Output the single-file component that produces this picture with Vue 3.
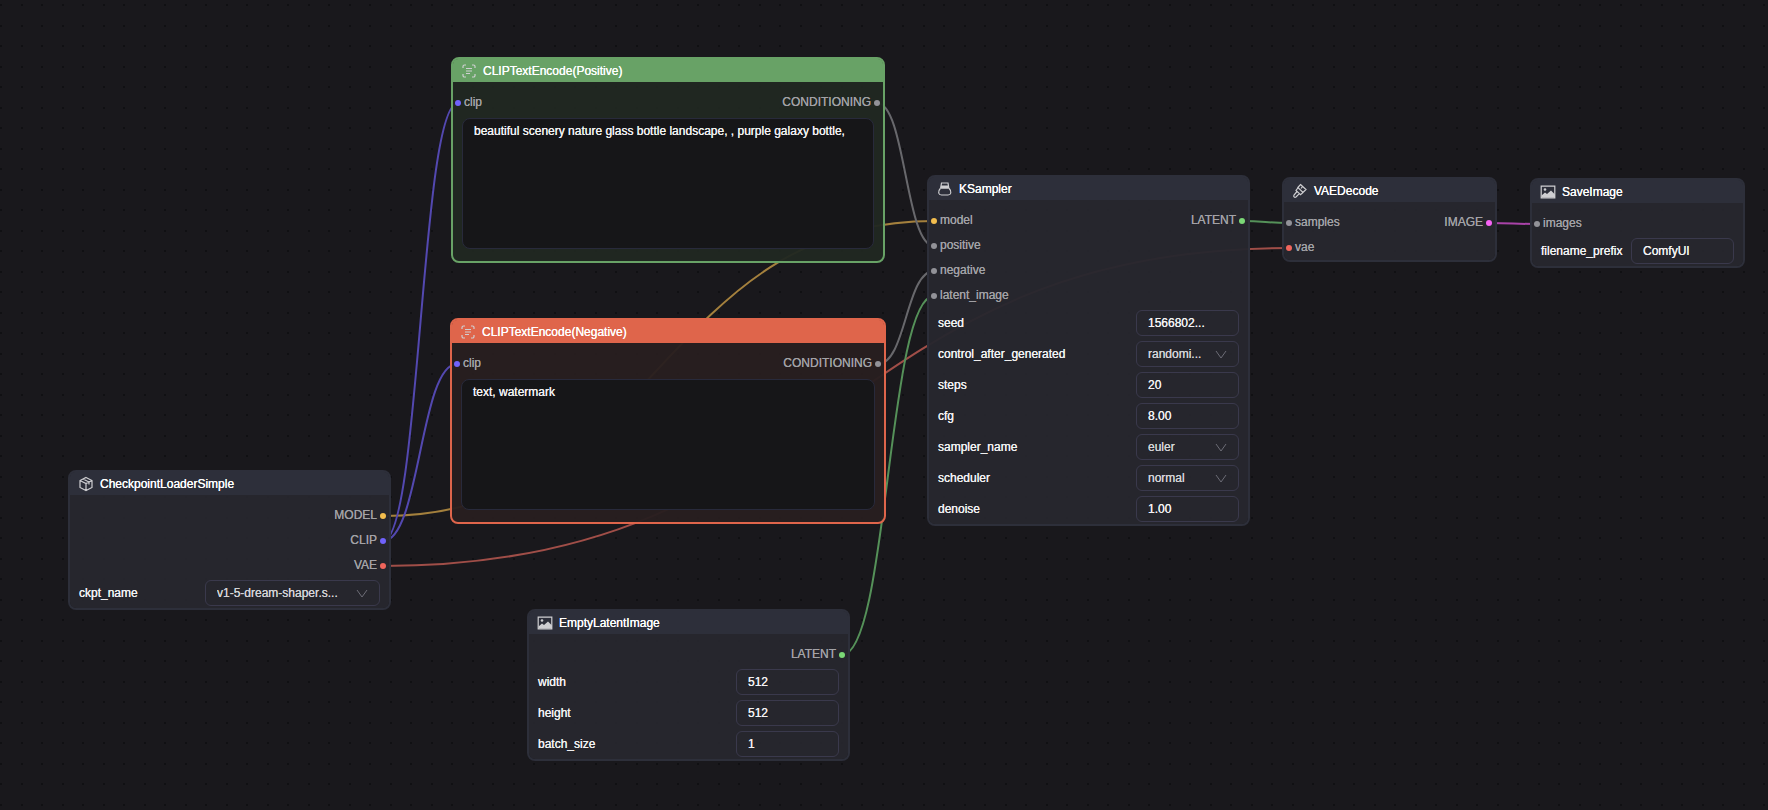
<script setup>
const nodes = [
  {
    id: 'positive', title: 'CLIPTextEncode(Positive)', icon: 'scan', tone: 'green', x: 451, y: 57, w: 434,
    inputs: [{ name: 'clip', color: 'violet' }],
    outputs: [{ name: 'CONDITIONING', color: 'gray' }],
    prompt: 'beautiful scenery nature glass bottle landscape, , purple galaxy bottle,',
  },
  {
    id: 'negative', title: 'CLIPTextEncode(Negative)', icon: 'scan', tone: 'orange', x: 450, y: 318, w: 436,
    inputs: [{ name: 'clip', color: 'violet' }],
    outputs: [{ name: 'CONDITIONING', color: 'gray' }],
    prompt: 'text, watermark',
  },
  {
    id: 'checkpoint', title: 'CheckpointLoaderSimple', icon: 'box', x: 68, y: 470, w: 323,
    inputs: [],
    outputs: [{ name: 'MODEL', color: 'yellow' }, { name: 'CLIP', color: 'violet' }, { name: 'VAE', color: 'red' }],
    fields: [{ name: 'ckpt_name', value: 'v1-5-dream-shaper.s...', select: true, wide: true }],
  },
  {
    id: 'latent', title: 'EmptyLatentImage', icon: 'image', x: 527, y: 609, w: 323,
    inputs: [],
    outputs: [{ name: 'LATENT', color: 'green' }],
    fields: [{ name: 'width', value: '512' }, { name: 'height', value: '512' }, { name: 'batch_size', value: '1' }],
  },
  {
    id: 'sampler', title: 'KSampler', icon: 'sampler', x: 927, y: 175, w: 323,
    inputs: [
      { name: 'model', color: 'yellow' },
      { name: 'positive', color: 'gray' },
      { name: 'negative', color: 'gray' },
      { name: 'latent_image', color: 'gray' },
    ],
    outputs: [{ name: 'LATENT', color: 'green' }],
    fields: [
      { name: 'seed', value: '1566802...' },
      { name: 'control_after_generated', value: 'randomi...', select: true },
      { name: 'steps', value: '20' },
      { name: 'cfg', value: '8.00' },
      { name: 'sampler_name', value: 'euler', select: true },
      { name: 'scheduler', value: 'normal', select: true },
      { name: 'denoise', value: '1.00' },
    ],
  },
  {
    id: 'decode', title: 'VAEDecode', icon: 'brush', x: 1282, y: 177, w: 215,
    inputs: [{ name: 'samples', color: 'gray' }, { name: 'vae', color: 'red' }],
    outputs: [{ name: 'IMAGE', color: 'pink' }],
  },
  {
    id: 'save', title: 'SaveImage', icon: 'image', x: 1530, y: 178, w: 215,
    inputs: [{ name: 'images', color: 'gray' }],
    outputs: [],
    fields: [{ name: 'filename_prefix', value: 'ComfyUI' }],
  },
]

const links = [
  { from: ['checkpoint', 0], to: ['sampler', 0], color: '#a4803d' },
  { from: ['checkpoint', 1], to: ['positive', 0], color: '#5348b0' },
  { from: ['checkpoint', 1], to: ['negative', 0], color: '#5348b0' },
  { from: ['checkpoint', 2], to: ['decode', 1], color: '#a04e48' },
  { from: ['positive', 0], to: ['sampler', 1], color: '#68686c' },
  { from: ['negative', 0], to: ['sampler', 2], color: '#68686c' },
  { from: ['latent', 0], to: ['sampler', 3], color: '#559159' },
  { from: ['sampler', 0], to: ['decode', 0], color: '#559159' },
  { from: ['decode', 0], to: ['save', 0], color: '#aa43a9' },
]

const byId = Object.fromEntries(nodes.map((n) => [n.id, n]))
const portY = (node, row) => node.y + 46 + row * 25

function curve({ from, to }) {
  const a = byId[from[0]]
  const b = byId[to[0]]
  const x1 = a.x + a.w - 8
  const y1 = portY(a, from[1])
  const x2 = b.x + 7
  const y2 = portY(b, to[1])
  const mid = (x1 + x2) / 2
  return `M${x1} ${y1} C${mid} ${y1} ${mid} ${y2} ${x2} ${y2}`
}
</script>

<template>
  <main class="canvas">
    <svg class="backdrop" aria-hidden="true">
      <defs>
        <pattern id="dots" x="0" y="4" width="41" height="41" patternUnits="userSpaceOnUse">
          <circle cx="1" cy="1" r="1" />
          <circle cx="22" cy="1" r="1" />
          <circle cx="1" cy="22" r="1" />
          <circle cx="22" cy="22" r="1" />
        </pattern>
      </defs>
      <rect class="grid" width="100%" height="100%" />
      <path v-for="(link, i) in links" :key="i" class="link" :d="curve(link)" :stroke="link.color" />
    </svg>

    <section
      v-for="node in nodes"
      :key="node.id"
      class="node"
      :class="node.tone"
      :style="{ left: node.x + 'px', top: node.y + 'px', width: node.w + 'px' }"
    >
      <header class="head">
        <svg v-if="node.icon === 'scan'" class="icon" viewBox="0 0 16 16">
          <path d="M2 5V3.500A1.500 1.500 0 0 1 3.500 2H5M11 2h1.500A1.500 1.500 0 0 1 14 3.500V5M14 11v1.500a1.500 1.500 0 0 1-1.500 1.500H11M5 14H3.500A1.500 1.500 0 0 1 2 12.500V11M5 5.500h6M5 8h6M5 10.500h4" />
        </svg>
        <svg v-else-if="node.icon === 'box'" class="icon" viewBox="0 0 16 16">
          <path d="M8 1.500l6 3v7l-6 3-6-3v-7zM2 4.500l6 3 6-3M8 7.500v7M5 3l6 3v2.500" />
        </svg>
        <svg v-else-if="node.icon === 'image'" class="icon" viewBox="0 0 16 16">
          <path d="M1.200 2.200h13.600v11.600H1.200z" />
          <path class="solid" d="M1.500 13.500V11.500l3.500-3 2 1.500 4-3.500 4 4v3z" />
          <circle class="solid" cx="5" cy="5.500" r="1.300" />
        </svg>
        <svg v-else-if="node.icon === 'sampler'" class="icon" viewBox="0 0 16 16">
          <path d="M4.500 2h6.500l.8 5H3.700zM3.300 7.500C1.800 9 1.400 10.500 1.700 12c.3 1.500 1.200 2 2.800 2h6.500c1.600 0 2.500-.5 2.800-2 .3-1.500-.1-3-1.600-4.500" />
          <path class="solid" d="M4 4.500h7.500l.5 3H3.500z" />
        </svg>
        <svg v-else class="icon" viewBox="0 0 16 16">
          <path d="M8.500 1.500l5.500 5-3 3-5.200-5zM5.800 5L4 7.500l4.500 4.200L11 9.500M5 8.500l-3 3.500c-.9 1.500.5 2.800 2 2l3.300-3.300M10.500 3.500L9 5.500" />
        </svg>
        <h2 class="title">{{ node.title }}</h2>
      </header>

      <div class="ports">
        <ul class="side">
          <li v-for="port in node.inputs" :key="port.name" class="port">
            <i class="dot" :class="port.color"></i>{{ port.name }}
          </li>
        </ul>
        <ul class="side out">
          <li v-for="port in node.outputs" :key="port.name" class="port">
            {{ port.name }}<i class="dot" :class="port.color"></i>
          </li>
        </ul>
      </div>

      <textarea v-if="node.prompt" class="prompt" :value="node.prompt" :aria-label="node.title" spellcheck="false"></textarea>

      <div v-if="node.fields" class="fields">
        <div v-for="field in node.fields" :key="field.name" class="field">
          <label class="label" :for="node.id + '-' + field.name">{{ field.name }}</label>
          <div v-if="field.select" class="picker" :class="{ wide: field.wide }">
            <select :id="node.id + '-' + field.name" class="box select">
              <option>{{ field.value }}</option>
            </select>
            <svg class="chevron" viewBox="0 0 12 10" aria-hidden="true"><path d="M1 1l5 7 5-7" /></svg>
          </div>
          <input v-else :id="node.id + '-' + field.name" class="box" type="text" :value="field.value" />
        </div>
      </div>
    </section>
  </main>
</template>

<style>
body {
  background: #19181c;
}
</style>

<style scoped>
* {
  box-sizing: border-box;
}
.canvas {
  position: relative;
  width: 100%;
  min-height: 100vh;
  overflow: hidden;
  background: #19181c;
  font-family: "Liberation Sans", Arial, sans-serif;
  font-size: 12px;
  color: #f2f2f3;
}
.backdrop {
  position: absolute;
  inset: 0;
  width: 100%;
  height: 100%;
}
.backdrop circle {
  fill: #0d0d10;
}
.grid {
  fill: url(#dots);
}
.link {
  fill: none;
  stroke-width: 2;
}
.node {
  --edge: #2d2f3a;
  --head: #2d2f3a;
  --body: rgba(38, 38, 46, 0.96);
  position: absolute;
  display: flex;
  flex-direction: column;
  border: 2px solid var(--edge);
  border-radius: 8px;
  background: var(--body);
  background-clip: padding-box;
  text-shadow: 0 0 0 currentColor;
}
.node.green {
  --edge: #68a266;
  --head: #68a266;
  --body: rgba(32, 40, 33, 0.96);
}
.node.orange {
  --edge: #df654b;
  --head: #df654b;
  --body: rgba(40, 30, 31, 0.96);
}
.head {
  display: flex;
  align-items: center;
  gap: 6px;
  height: 23px;
  padding: 0 8px;
  background: var(--head);
  border-radius: 5px 5px 0 0;
}
.icon {
  width: 16px;
  height: 16px;
  fill: none;
  stroke: #cfcfd2;
  stroke-width: 1.2;
}
.icon .solid {
  fill: #cfcfd2;
  stroke: none;
}
.title {
  margin: 0;
  font-size: 12px;
  font-weight: 500;
  color: #fff;
}
.ports {
  display: flex;
  justify-content: space-between;
  padding: 7px 3px 1px 2px;
  color: #a2a2a6;
}
.side {
  margin: 0;
  padding: 0;
  list-style: none;
}
.port {
  display: flex;
  align-items: center;
  gap: 3px;
  height: 25px;
}
.out .port {
  justify-content: flex-end;
}
.dot {
  width: 6px;
  height: 6px;
  margin-top: 3px;
  border-radius: 50%;
}
.dot.violet { background: #7062fc; }
.dot.gray { background: #929298; }
.dot.yellow { background: #f3bd4e; }
.dot.red { background: #f0655c; }
.dot.green { background: #7bd876; }
.dot.pink { background: #f763f5; }
.prompt {
  height: 131px;
  margin: 3px 9px 12px;
  padding: 4px 11px;
  border: 1px solid #282a3b;
  border-radius: 8px;
  outline: 0;
  resize: none;
  background: #161618;
  color: #f2f2f3;
  font: inherit;
  line-height: 16px;
  text-shadow: inherit;
}
.fields {
  display: flex;
  flex-direction: column;
  gap: 5px;
  padding: 2px 9px;
}
.field {
  display: flex;
  align-items: center;
  justify-content: space-between;
}
.box {
  width: 103px;
  height: 26px;
  padding: 0 11px;
  border: 1px solid #3a394c;
  border-radius: 6px;
  outline: 0;
  background: transparent;
  color: #f2f2f3;
  font: inherit;
  text-shadow: inherit;
}
.picker {
  position: relative;
  width: 103px;
}
.picker.wide {
  width: 175px;
}
.select {
  display: block;
  width: 100%;
  appearance: none;
  color: #d4d4d7;
}
.chevron {
  position: absolute;
  top: 9px;
  right: 12px;
  width: 12px;
  height: 10px;
  fill: none;
  stroke: #6c6c76;
  pointer-events: none;
}
</style>
